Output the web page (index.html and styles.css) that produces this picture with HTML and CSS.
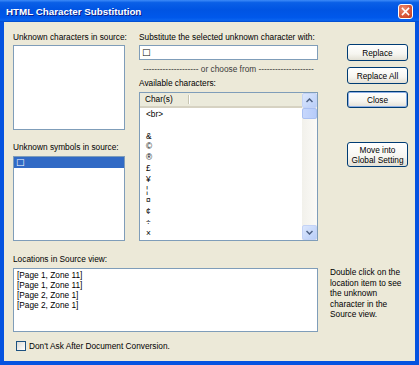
FILE: index.html
```html
<!DOCTYPE html>
<html lang="en">
<head>
  <meta charset="UTF-8">
  <title>HTML Character Substitution</title>
  <link rel="stylesheet" href="styles.css">
</head>
<body>

  <div class="window">
    <!-- Barra de título -->
    <div class="titlebar">
      <span class="title">HTML Character Substitution</span>
      <span class="close-x">
        <svg width="9" height="9" viewBox="0 0 9 9">
          <path d="M1.5 1.5 L7.5 7.5 M7.5 1.5 L1.5 7.5" stroke="#fff" stroke-width="1.6" stroke-linecap="square"/>
        </svg>
      </span>
    </div>

    <div class="client">
      <div class="top">
        <div class="col-left">
          <div class="label">Unknown characters in source:</div>
          <div class="listbox"></div>
          <div class="label label-second">Unknown symbols in source:</div>
          <div class="listbox listbox-second">
            <div class="item selected"><span class="sq">□</span></div>
          </div>
        </div>

        <div class="col-mid">
          <div class="label">Substitute the selected unknown character with:</div>
          <div class="input"><span class="sq">□</span></div>
          <div class="separator">-------------------- or choose from --------------------</div>
          <div class="label label-avail">Available characters:</div>
          <div class="listview">
            <div class="lv-main">
              <div class="lv-header">
                <span class="col-head">Char(s)</span>
              </div>
              <div class="lv-rows">
                <div class="row">&lt;br&gt;</div>
                <div class="row"></div>
                <div class="row">&amp;</div>
                <div class="row">©</div>
                <div class="row">®</div>
                <div class="row">£</div>
                <div class="row">¥</div>
                <div class="row">¦</div>
                <div class="row">¤</div>
                <div class="row">¢</div>
                <div class="row">÷</div>
                <div class="row">×</div>
              </div>
            </div>
            <div class="scrollbar">
              <div class="sb-btn">
                <svg width="7" height="5" viewBox="0 0 7 5"><path d="M0.5 4 L3.5 1 L6.5 4" fill="none" stroke="#4D6185" stroke-width="1.5"/></svg>
              </div>
              <div class="sb-thumb"></div>
              <div class="sb-track"></div>
              <div class="sb-btn">
                <svg width="7" height="5" viewBox="0 0 7 5"><path d="M0.5 1 L3.5 4 L6.5 1" fill="none" stroke="#4D6185" stroke-width="1.5"/></svg>
              </div>
            </div>
          </div>
        </div>

        <div class="col-right">
          <button class="btn">Replace</button>
          <button class="btn btn-all">Replace All</button>
          <button class="btn btn-close">Close</button>
          <button class="btn btn-move">Move into<br>Global Setting</button>
        </div>
      </div>

      <div class="bottom">
        <div class="label">Locations in Source view:</div>
        <div class="loc-row">
          <div class="locations">
            <div>[Page 1, Zone 11]</div>
            <div>[Page 1, Zone 11]</div>
            <div>[Page 2, Zone 1]</div>
            <div>[Page 2, Zone 1]</div>
          </div>
          <div class="note">Double click on the<br>location item to see<br>the unknown<br>character in the<br>Source view.</div>
        </div>
        <label class="check-row">
          <span class="checkbox"></span>
          Don't Ask After Document Conversion.
        </label>
      </div>
    </div>
  </div>

</body>
</html>
```

FILE: styles.css
```css
* {
  margin: 0;
  padding: 0;
  box-sizing: border-box;
}
body {
  font-family: 'Liberation Sans', Arial, sans-serif;
  font-size: 8.3px;
  color: #000;
  background: #fff;
}
.window {
  width: 419px;
  height: 365px;
  background: #0553E0;
  display: flex;
  flex-direction: column;
}
.titlebar {
  height: 22px;
  display: flex;
  align-items: center;
  justify-content: space-between;
  padding: 1px 6px 0 6px;
  background: linear-gradient(to bottom, #3D8BF8 0%, #0A5FE6 12%, #0054E3 45%, #0058EB 80%, #0A64F0 92%, #0048C8 100%);
}
.title {
  color: #fff;
  font-weight: bold;
  font-size: 9.8px;
  text-shadow: 1px 1px #0A1E8C;
}
.close-x {
  width: 15px;
  height: 15px;
  border: 1px solid #fff;
  border-radius: 3px;
  background: radial-gradient(circle at 35% 30%, #EC8C72 0%, #D9583A 55%, #C0391C 100%);
  display: flex;
  align-items: center;
  justify-content: center;
}
.client {
  flex: 1;
  background: #ECE9D8;
  margin: 0 4px 4px 4px;
  padding-left: 9px;
}
.top {
  display: flex;
}
.label {
  line-height: 12px;
  white-space: nowrap;
}
.col-left {
  width: 112px;
  margin-right: 14px;
  padding-top: 9px;
}
.listbox {
  margin-top: 2px;
  height: 85px;
  background: #fff;
  border: 1px solid #7F9DB9;
}
.label-second {
  margin-top: 11px;
}
.listbox-second {
  margin-top: 3px;
}
.item {
  height: 11px;
  line-height: 11px;
  padding-left: 2px;
}
.item.selected {
  background: #316AC5;
  color: #fff;
}
.sq {
  font-family: 'DejaVu Sans', sans-serif;
  font-size: 9px;
}
.col-mid {
  width: 179px;
  margin-right: 29px;
  padding-top: 9px;
}
.input {
  margin-top: 2px;
  height: 15px;
  line-height: 13px;
  padding-left: 2px;
  background: #fff;
  border: 1px solid #7F9DB9;
}
.separator {
  margin-top: 3px;
  line-height: 12px;
  text-align: center;
  color: #3A3A3A;
  white-space: nowrap;
  overflow: hidden;
}
.label-avail {
  margin-top: 2px;
}
.listview {
  margin-top: 3px;
  height: 149px;
  background: #fff;
  border: 1px solid #7F9DB9;
  display: flex;
}
.lv-main {
  flex: 1;
}
.lv-header {
  height: 15px;
  background: #EBEADB;
  border-bottom: 2px solid #D6D2C2;
  display: flex;
  align-items: center;
}
.col-head {
  width: 49px;
  padding-left: 5px;
  line-height: 9px;
  border-right: 1px solid #C7C5B2;
  box-shadow: 1px 0 0 #fff;
}
.lv-rows {
  padding-left: 6px;
  padding-top: 1px;
}
.row {
  height: 10.8px;
  line-height: 10.8px;
}
.scrollbar {
  width: 15px;
  display: flex;
  flex-direction: column;
  background: #F3F1EA;
}
.sb-btn {
  height: 15px;
  background: linear-gradient(to bottom right, #DCE7FD, #B9CEF8);
  border: 1px solid #C4D3F6;
  border-radius: 2px;
  display: flex;
  align-items: center;
  justify-content: center;
}
.sb-thumb {
  height: 11px;
  background: linear-gradient(to right, #C7D7FC, #B6CCFA);
  border: 1px solid #A9C0F2;
  border-radius: 2px;
}
.sb-track {
  flex: 1;
  background: linear-gradient(to right, #F2F1EB, #FBFAF7);
}
.col-right {
  width: 61px;
  padding-top: 22px;
  display: flex;
  flex-direction: column;
}
.btn {
  font-family: inherit;
  font-size: 8.3px;
  height: 17px;
  color: #000;
  border: 1px solid #003C74;
  border-radius: 3px;
  background: linear-gradient(to bottom, #FFFFFF 0%, #F6F5F0 60%, #E3E0D5 100%);
  line-height: 10px;
}
.btn-all {
  margin-top: 6px;
}
.btn-close {
  margin-top: 7px;
  box-shadow: inset 0 0 0 1px #8FB0E6;
}
.btn-move {
  margin-top: 34px;
  height: 25px;
}
.bottom {
  margin-top: 12px;
}
.loc-row {
  display: flex;
  align-items: flex-start;
  margin-top: 3px;
}
.locations {
  width: 305px;
  height: 64px;
  background: #fff;
  border: 1px solid #7F9DB9;
  padding: 1px 0 0 3px;
  line-height: 10px;
}
.note {
  margin-left: 12px;
  margin-top: -1px;
  line-height: 10.5px;
  white-space: nowrap;
}
.check-row {
  display: flex;
  align-items: center;
  margin-top: 9px;
  padding-left: 3px;
  line-height: 10px;
}
.checkbox {
  width: 10px;
  height: 10px;
  border: 1px solid #1C5180;
  background: linear-gradient(to bottom right, #DCDBD5, #FFFFFF);
  margin-right: 3px;
}
```
